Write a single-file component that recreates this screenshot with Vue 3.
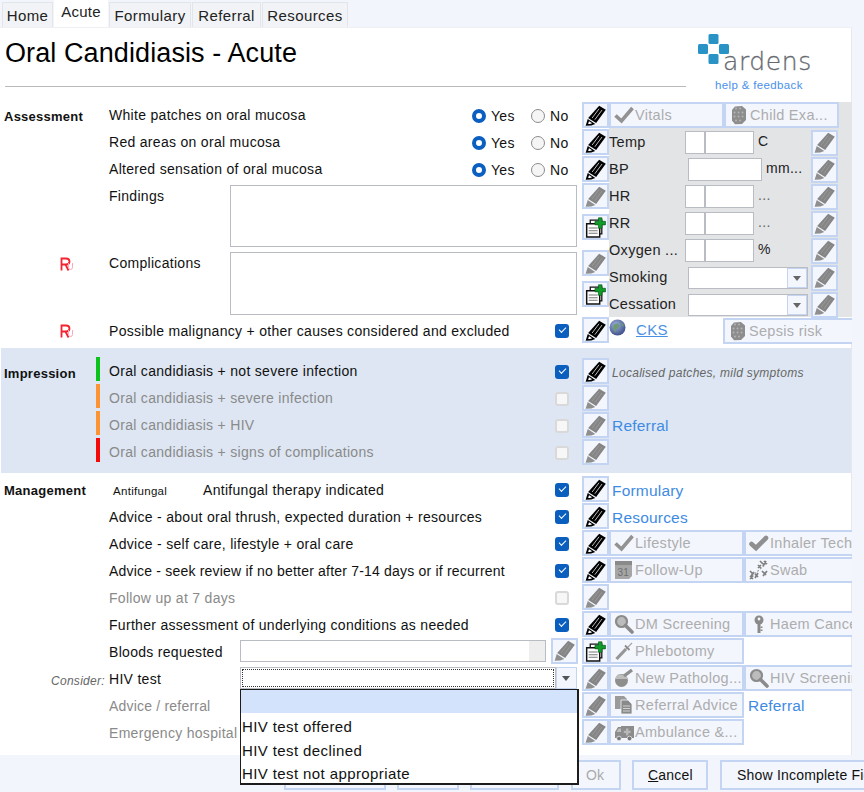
<script setup>
const tabs = ['Home', 'Acute', 'Formulary', 'Referral', 'Resources']
const radioRows = ['White patches on oral mucosa', 'Red areas on oral mucosa', 'Altered sensation of oral mucosa']
const vitals = [
  { label: 'Temp', kind: 'split', unit: 'C' },
  { label: 'BP', kind: 'wide', unit: 'mm...' },
  { label: 'HR', kind: 'split', unit: '...', faint: true },
  { label: 'RR', kind: 'split', unit: '...', faint: true },
  { label: 'Oxygen ...', kind: 'split', unit: '%' },
  { label: 'Smoking', kind: 'combo', unit: '' },
  { label: 'Cessation', kind: 'combo', unit: '' }
]
const impressions = [
  { text: 'Oral candidiasis + not severe infection', bar: 'green', on: true },
  { text: 'Oral candidiasis + severe infection', bar: 'orange' },
  { text: 'Oral candidiasis + HIV', bar: 'orange' },
  { text: 'Oral candidiasis + signs of complications', bar: 'red' }
]
const options = ['HIV test offered', 'HIV test declined', 'HIV test not appropriate']
</script>

<template>
  <div class="page">
    <svg class="defs" aria-hidden="true">
      <defs>
        <radialGradient id="gl" cx="40%" cy="35%" r="70%">
          <stop offset="0" stop-color="#9fb4dc" /><stop offset="1" stop-color="#3b4a86" />
        </radialGradient>
        <symbol id="pen-b" viewBox="0 0 20 20">
          <path d="M13.500 .6 19.800 4.600 10.600 17.200 3 12.400Z" fill="#000" />
          <path d="M13.400 3.600 6.800 12.400M16.200 4.800 9.400 14" stroke="#fff" stroke-width=".7" fill="none" />
          <path d="M2.600 13.400 9.800 18 6 19.600 .6 19.800 1.800 16Z" fill="#000" />
          <path d="M3.800 15.400 6.800 17.400 4.800 18.200 3 18.200Z" fill="#fff" />
        </symbol>
        <symbol id="pen-g" viewBox="0 0 20 20">
          <path d="M13.500 .6 19.800 4.600 10.600 17.200 3 12.400Z" fill="#858585" />
          <path d="M13.400 3.600 6.800 12.400M16.200 4.800 9.400 14" stroke="#a0a0a0" stroke-width=".7" fill="none" />
          <path d="M2.600 13.400 9.800 18 6 19.600 .6 19.800 1.800 16Z" fill="#8f8f8f" />
        </symbol>
        <symbol id="docplus" viewBox="0 0 20 20">
          <path d="M5 3h11v13H5z" fill="#fff" stroke="#111" stroke-width="1.200" />
          <path d="M1.600 6.500h12.400v12.500H1.600z" fill="#fff" stroke="#111" stroke-width="1.400" />
          <path d="M3.500 10.500h8.500M3.500 13h8.500M3.500 15.500h8.500" stroke="#777" />
          <path d="M12.800.8h3.400v3.300h3.300v3.400h-3.300v3.300h-3.400V7.500H9.500V4.100h3.300Z" fill="#0f9c2a" stroke="#0a4f14" stroke-width=".6" />
        </symbol>
        <symbol id="tick" viewBox="0 0 20 20">
          <path d="M1.500 10.500 7.500 16 18.500 3" fill="none" stroke="#929292" stroke-width="3.600" />
        </symbol>
        <symbol id="tick2" viewBox="0 0 20 20">
          <path d="M2.500 11 7 15 17 5" fill="none" stroke="#8f8f8f" stroke-width="4.600" stroke-linecap="round" />
        </symbol>
        <symbol id="cube" viewBox="0 0 20 20">
          <path d="M6 1.500 13 1l4 3.500V15l-4 4-7 .3L3 15.500V5Z" fill="#8d8d8d" />
          <path d="M7 3.500h.1M11 3.500h.1M5.500 7.500h.1M9.500 7.500h.1M13.500 7.500h.1M5.500 11.500h.1M9.500 11.500h.1M13.500 11.500h.1M7 15.500h.1M11 15.500h.1" stroke="#b5b5b5" stroke-width="1.800" stroke-linecap="round" />
        </symbol>
        <symbol id="cal" viewBox="0 0 20 20">
          <path d="M1 1h17v15l-3 3H1Z" fill="#a6a6a6" />
          <path d="M1 1h17v4H1Z" fill="#8a8a8a" />
          <text x="3.500" y="16" font-size="10" font-family="Liberation Sans" fill="#6f6f6f">31</text>
        </symbol>
        <symbol id="swab" viewBox="0 0 20 20">
          <path d="M3 16 17 4" stroke="#a2a2a2" stroke-width="1.200" stroke-dasharray="2 1.500" />
          <path d="M11 1l3 3M15 1l3 3M17 1l-3 5M9 5l3 3M12 5 9 8M1 11l3 3M5 12l-3 4M6 14l3 3M9 13l-3 5M13 11l4 4M18 11l-4 5M1 16l3 3M4 16l-3 3" stroke="#7f7f7f" stroke-width="1.700" fill="none" />
        </symbol>
        <symbol id="glass" viewBox="0 0 20 20">
          <circle cx="7.500" cy="7.500" r="5.500" fill="#bcbcbc" stroke="#8b8b8b" stroke-width="2.200" />
          <path d="M11.500 11.500 18 18" stroke="#8b8b8b" stroke-width="3.600" stroke-linecap="round" />
        </symbol>
        <symbol id="key" viewBox="0 0 20 20">
          <circle cx="10" cy="6" r="4.500" fill="#8a8a8a" />
          <circle cx="10" cy="5" r="1.400" fill="#f3f6fd" />
          <path d="M8.500 9h3v10h-3z" fill="#8a8a8a" />
          <path d="M11.500 12.500h2v1.600h-2zM11.500 15.500h2v1.600h-2z" fill="#8a8a8a" />
        </symbol>
        <symbol id="syringe" viewBox="0 0 20 20">
          <path d="M2.500 18 12 8" stroke="#969696" stroke-width="3.200" />
          <path d="M12 8 18 2" stroke="#a5a5a5" stroke-width="1.200" />
          <path d="M11 4.500 15.500 9" stroke="#8a8a8a" stroke-width="1.800" />
        </symbol>
        <symbol id="flask" viewBox="0 0 20 20">
          <circle cx="7.500" cy="12.500" r="6.500" fill="#8e8e8e" />
          <path d="M1.500 11h12a6 6 0 0 0-1-3L5 6A6 6 0 0 0 1.500 11Z" fill="#bdbdbd" />
          <path d="M10 8 18 2" stroke="#8e8e8e" stroke-width="3.400" />
        </symbol>
        <symbol id="docs" viewBox="0 0 20 20">
          <path d="M1 1h9l3 3v10H1Z" fill="#9a9a9a" />
          <path d="M7 5h7l4 4v10H7Z" fill="#8a8a8a" stroke="#f3f6fd" stroke-width=".8" />
          <path d="M9 11h7M9 13.500h7M9 16h7" stroke="#d0d0d0" />
        </symbol>
        <symbol id="amb" viewBox="0 0 20 20">
          <path d="M7 4h13v12H1v-6l3-5h3Z" fill="#8c8c8c" />
          <path d="M12 6.500h2.400v2.200h2.200v2.400h-2.200v2.200H12v-2.200H9.800V8.700H12Z" fill="#b8b8b8" />
          <path d="M2.500 10 4.600 6.500H7V10Z" fill="#bdbdbd" />
          <circle cx="5" cy="16.500" r="2.300" fill="#777" stroke="#f3f6fd" stroke-width=".7" />
          <circle cx="15.500" cy="16.500" r="2.300" fill="#777" stroke="#f3f6fd" stroke-width=".7" />
        </symbol>
      </defs>
    </svg>

    <nav class="tabs">
      <span v-for="t in tabs" :key="t" class="tab" :class="['tab-' + t.toLowerCase(), { active: t === 'Acute' }]">{{ t }}</span>
    </nav>

    <main class="panel">
      <header class="head">
        <div class="head-left"><h1>Oral Candidiasis - Acute</h1></div>
        <div class="logo">
          <svg class="cross" viewBox="0 0 31 30">
            <rect x="10.500" y="0" width="10" height="10" rx="1.500" fill="#2a93c6" />
            <rect x="0" y="10" width="10" height="10" rx="1.500" fill="#2a93c6" />
            <rect x="21" y="10" width="10" height="10" rx="1.500" fill="#2a93c6" />
            <rect x="10.500" y="20" width="10" height="10" rx="1.500" fill="#2a93c6" />
          </svg>
          <span class="word">ardens</span>
          <a class="help">help &amp; feedback</a>
        </div>
      </header>

      <section class="sec assess">
        <div class="left">
          <div v-for="(r, i) in radioRows" :key="r" class="row">
            <b class="lbl">{{ i === 0 ? 'Assessment' : '' }}</b>
            <span class="txt up">{{ r }}</span>
            <span class="radio on"></span><span class="rtext yes">Yes</span>
            <span class="radio"></span><span class="rtext no">No</span>
          </div>
          <div class="row tall">
            <span class="lbl"></span>
            <span class="txt short">Findings</span>
            <div class="memo"></div>
          </div>
          <div class="row tall">
            <span class="lbl flagged"><svg class="flag" viewBox="0 0 13 14"><path d="M1.500 13.500V1.500h4.500q3.500 0 3.500 3T6 7.500H1.500M5.500 7.500l3 6" fill="none" stroke="#f32430" stroke-width="1.800" /><path d="M8.500 6v4.500q0 2 2 2t2-2V6" fill="none" stroke="#f7a8bc" /></svg></span>
            <span class="txt short">Complications</span>
            <div class="memo memo2"></div>
          </div>
          <div class="row">
            <span class="lbl flagged"><svg class="flag" viewBox="0 0 13 14"><path d="M1.500 13.500V1.500h4.500q3.500 0 3.500 3T6 7.500H1.500M5.500 7.500l3 6" fill="none" stroke="#f32430" stroke-width="1.800" /><path d="M8.500 6v4.500q0 2 2 2t2-2V6" fill="none" stroke="#f7a8bc" /></svg></span>
            <span class="txt">Possible malignancy + other causes considered and excluded</span>
            <span class="chk on"></span>
          </div>
        </div>

        <div class="pens">
          <button class="pb"><svg class="ic"><use href="#pen-b" /></svg></button>
          <button class="pb"><svg class="ic"><use href="#pen-b" /></svg></button>
          <button class="pb"><svg class="ic"><use href="#pen-b" /></svg></button>
          <div class="pgroup">
            <button class="pb"><svg class="ic"><use href="#pen-g" /></svg></button>
            <button class="pb"><svg class="ic"><use href="#docplus" /></svg></button>
          </div>
          <div class="pgroup">
            <button class="pb"><svg class="ic"><use href="#pen-g" /></svg></button>
            <button class="pb"><svg class="ic"><use href="#docplus" /></svg></button>
          </div>
          <button class="pb"><svg class="ic"><use href="#pen-b" /></svg></button>
        </div>

        <div class="right">
          <div class="grey">
            <div class="rbtns">
              <button class="tb narrow"><svg class="tic"><use href="#tick" /></svg>Vitals</button>
              <button class="tb narrow"><svg class="tic"><use href="#cube" /></svg>Child Exa...</button>
            </div>
            <div v-for="v in vitals" :key="v.label" class="vrow">
              <span class="vlab">{{ v.label }}</span>
              <span v-if="v.kind === 'split'" class="split"><i></i><i></i></span>
              <span v-else-if="v.kind === 'wide'" class="wide"></span>
              <span v-else class="vcombo"><i></i></span>
              <span v-if="v.unit" class="unit" :class="{ faint: v.faint, far: v.kind === 'wide' }">{{ v.unit }}</span>
              <button class="pb vpen"><svg class="ic"><use href="#pen-g" /></svg></button>
            </div>
          </div>
          <div class="cks">
            <svg class="globe" viewBox="0 0 16 16"><circle cx="8" cy="8" r="7.500" fill="url(#gl)" /><path d="M4 6q3-3 5-1t-1 4-1 4q-3-1-3-7ZM11 3q3 1 3 4-2 0-3-4Z" fill="#6d9a74" /></svg>
            <a class="cks-link">CKS</a>
            <button class="tb sepsis"><svg class="tic"><use href="#cube" /></svg>Sepsis risk</button>
          </div>
        </div>
      </section>

      <section class="sec impression">
        <div class="left">
          <div v-for="(m, i) in impressions" :key="m.text" class="row">
            <b class="lbl lbl-imp">{{ i === 0 ? 'Impression' : '' }}<i class="bar" :class="m.bar"></i></b>
            <span class="txt up" :class="{ dim: !m.on }">{{ m.text }}</span>
            <span class="chk" :class="{ on: m.on }"></span>
          </div>
        </div>
        <div class="pens">
          <button v-for="(m, i) in impressions" :key="i" class="pb"><svg class="ic"><use :href="m.on ? '#pen-b' : '#pen-g'" /></svg></button>
        </div>
        <div class="right">
          <div class="hint">Localised patches, mild symptoms</div>
          <div class="hint"></div>
          <a class="link">Referral</a>
        </div>
      </section>

      <section class="sec manage">
        <div class="left">
          <div class="row">
            <b class="lbl">Management</b>
            <span class="tag">Antifungal</span>
            <span class="txt">Antifungal therapy indicated</span>
            <span class="chk on"></span>
          </div>
          <div class="row"><span class="lbl"></span><span class="txt">Advice - about oral thrush, expected duration + resources</span><span class="chk on"></span></div>
          <div class="row"><span class="lbl"></span><span class="txt">Advice - self care, lifestyle + oral care</span><span class="chk on"></span></div>
          <div class="row"><span class="lbl"></span><span class="txt tight">Advice - seek review if no better after 7-14 days or if recurrent</span><span class="chk on"></span></div>
          <div class="row"><span class="lbl"></span><span class="txt dim">Follow up at 7 days</span><span class="chk"></span></div>
          <div class="row"><span class="lbl"></span><span class="txt">Further assessment of underlying conditions as needed</span><span class="chk on"></span></div>
          <div class="row">
            <span class="lbl"></span><span class="txt short2">Bloods requested</span>
            <span class="blood"><i></i></span>
            <button class="pb bloodpen"><svg class="ic"><use href="#pen-g" /></svg></button>
          </div>
          <div class="row">
            <span class="lbl lbl-cons"><em>Consider:</em></span><span class="txt short2">HIV test</span>
            <div class="combo">
              <span class="focus"></span><span class="arrow"><i></i></span>
              <div class="menu">
                <div class="opt sel"></div>
                <div v-for="o in options" :key="o" class="opt">{{ o }}</div>
              </div>
            </div>
          </div>
          <div class="row"><span class="lbl"></span><span class="txt dim tight">Advice / referral</span></div>
          <div class="row"><span class="lbl"></span><span class="txt dim">Emergency hospital</span></div>
        </div>
        <div class="pens">
          <button class="pb"><svg class="ic"><use href="#pen-b" /></svg></button>
          <button class="pb"><svg class="ic"><use href="#pen-b" /></svg></button>
          <button class="pb"><svg class="ic"><use href="#pen-b" /></svg></button>
          <button class="pb"><svg class="ic"><use href="#pen-b" /></svg></button>
          <button class="pb"><svg class="ic"><use href="#pen-g" /></svg></button>
          <button class="pb"><svg class="ic"><use href="#pen-b" /></svg></button>
          <button class="pb"><svg class="ic"><use href="#docplus" /></svg></button>
          <button class="pb"><svg class="ic"><use href="#pen-g" /></svg></button>
          <button class="pb"><svg class="ic"><use href="#pen-g" /></svg></button>
          <button class="pb"><svg class="ic"><use href="#pen-g" /></svg></button>
        </div>
        <div class="right">
          <a class="link line">Formulary</a>
          <a class="link line">Resources</a>
          <div class="rbtns"><button class="tb"><svg class="tic"><use href="#tick" /></svg>Lifestyle</button><button class="tb"><svg class="tic"><use href="#tick2" /></svg>Inhaler Technique</button></div>
          <div class="rbtns"><button class="tb"><svg class="tic"><use href="#cal" /></svg>Follow-Up</button><button class="tb"><svg class="tic"><use href="#swab" /></svg>Swab</button></div>
          <div class="rbtns"></div>
          <div class="rbtns"><button class="tb"><svg class="tic"><use href="#glass" /></svg>DM Screening</button><button class="tb"><svg class="tic"><use href="#key" /></svg>Haem Cancer</button></div>
          <div class="rbtns"><button class="tb"><svg class="tic"><use href="#syringe" /></svg>Phlebotomy</button></div>
          <div class="rbtns"><button class="tb"><svg class="tic"><use href="#flask" /></svg>New Patholog...</button><button class="tb"><svg class="tic"><use href="#glass" /></svg>HIV Screening</button></div>
          <div class="rbtns"><button class="tb"><svg class="tic"><use href="#docs" /></svg>Referral Advice</button><a class="link inline">Referral</a></div>
          <div class="rbtns"><button class="tb"><svg class="tic"><use href="#amb" /></svg>Ambulance &amp;...</button></div>
        </div>
      </section>
    </main>

    <footer class="foot">
      <button class="fb f1"></button>
      <button class="fb f2"></button>
      <button class="fb f3"></button>
      <button class="fb f4">Ok</button>
      <button class="fb f5"><u>C</u>ancel</button>
      <button class="fb f6">Show Incomplete Fields</button>
    </footer>
  </div>
</template>

<style>
html, body { margin: 0; padding: 0; background: #f2f5fc; }
</style>

<style scoped>
.page { width: 864px; height: 792px; overflow: hidden; background: #f2f5fc; font: 14px/20px "Liberation Sans", Arial, sans-serif; color: #111; letter-spacing: .3px; }
.defs { position: absolute; width: 0; height: 0; }
button { font: inherit; letter-spacing: inherit; padding: 0; margin: 0; }

.tabs { height: 27px; display: flex; padding-left: 2px; box-sizing: border-box; align-items: flex-end; }
.tab { height: 25px; box-sizing: border-box; background: #f1f3f6; border: 1px solid #e2e5ea; border-bottom: 0; text-align: center; line-height: 25px; font-size: 15px; letter-spacing: .4px; margin-right: 1px; color: #222; }
.tab.active { height: 27px; background: #fff; border-color: #fff; line-height: 22px; margin-right: 1px; letter-spacing: .2px; }
.tab-home { width: 51px; }
.tab-acute { width: 54px; }
.tab-formulary { width: 82px; }
.tab-referral { width: 69px; }
.tab-resources { width: 86px; }

.panel { width: 852px; height: 728px; background: #fff; border-right: 1px solid #e6e8ed; border-top: 1px solid #eef0f3; box-sizing: border-box; }
.head { height: 73px; display: flex; }
.head-left { width: 681px; height: 59px; margin-left: 5px; border-bottom: 1px solid #b9b9b9; box-sizing: border-box; }
h1 { margin: 0; font-weight: 400; font-size: 27px; line-height: 30px; padding-top: 10px; letter-spacing: .1px; color: #000; }
.logo { margin-left: 12px; padding-top: 6px; display: flex; flex-direction: column; }
.cross { width: 31px; height: 30px; }
.word { font-family: "DejaVu Sans", sans-serif; font-weight: 200; font-size: 25px; line-height: 20px; color: #666a70; margin: -12px 0 0 25px; letter-spacing: .6px; -webkit-text-stroke: .3px #666a70; }
.help { font-size: 11.500px; line-height: 14px; color: #4a90ea; margin: 6px 0 0 17px; letter-spacing: .35px; }

.sec { display: flex; }
.left { width: 582px; flex: none; }
.pens { width: 27px; flex: none; display: flex; flex-direction: column; gap: 1px; }
.right { width: 243px; flex: none; overflow: hidden; }
.assess { height: 247px; padding-top: 1px; box-sizing: border-box; }
.impression { height: 125px; padding-top: 10px; box-sizing: border-box; background: #dde6f2; margin-left: 1px; }
.impression .left { width: 581px; }
.impression .right { width: 242px; }
.manage { height: 281px; padding-top: 3px; box-sizing: border-box; }

.row { height: 27px; display: flex; align-items: center; position: relative; }
.tall { height: 67px; align-items: flex-start; }
.lbl { width: 109px; flex: none; box-sizing: border-box; padding: 2px 0 0 4px; font-size: 13px; letter-spacing: .25px; }
.txt { flex: 1; white-space: nowrap; overflow: hidden; }
.up { margin-top: -2px; }
.tight { letter-spacing: .2px; }
.tall .txt { line-height: 27px; }
.short { flex: none; width: 121px; }
.short2 { flex: none; width: 131px; }
.dim { color: #8a8a8a; }
.flagged { height: 27px; display: flex; align-items: center; padding: 0 0 0 60px; }
.flag { width: 13px; height: 14px; }

.radio { width: 14px; height: 14px; flex: none; box-sizing: border-box; border-radius: 50%; border: 1px solid #8c8c8c; background: #f5f5f5; }
.radio.on { border: 4px solid #0b5fc0; background: #fff; }
.rtext { flex: none; margin-left: 5px; }
.rtext.yes { width: 40px; }
.rtext.no { width: 32px; }

.chk { width: 14px; height: 14px; margin: 0 13px; box-sizing: border-box; border-radius: 3px; flex: none; border: 2px solid #d9d9d9; background: #f7f7f7; position: relative; }
.chk.on { border: 0; background: #0a5fbe; }
.chk.on::after { content: ""; position: absolute; left: 4px; top: 3px; width: 6px; height: 3px; border: solid #fff; border-width: 0 0 1.500px 1.500px; transform: rotate(-45deg); }

.memo { width: 347px; height: 62px; margin-top: 2px; box-sizing: border-box; border: 1px solid #b9bcc2; background: #fff; }
.memo2 { height: 63px; }

.pb { width: 27px; height: 26px; flex: none; box-sizing: border-box; background: #f3f6fd; border: 2px solid #c3d5f3; display: flex; align-items: center; justify-content: center; }
.ic { width: 21px; height: 21px; }
.pgroup { height: 66px; display: flex; flex-direction: column; gap: 5px; }

.grey { background: #e3e4e6; height: 215px; }
.rbtns { height: 27px; display: flex; flex: none; }
.tb { width: 135px; height: 26px; flex: none; box-sizing: border-box; background: #f3f6fd; border: 2px solid #c3d5f3; display: flex; align-items: center; color: #adadad; padding: 0 0 1px 3px; white-space: nowrap; overflow: hidden; font-size: 14.500px; }
.tb.narrow { width: 115px; }
.tic { width: 20px; height: 20px; flex: none; margin: 1px 1px 0 0; }

.vrow { height: 27px; display: grid; grid-template-columns: 76px 1fr 27px 14px; align-items: center; position: relative; }
.vrow .vpen { grid-column: 3; }
.vlab { white-space: nowrap; color: #222; font-size: 14.500px; margin-top: -2px; }
.split { display: flex; position: absolute; left: 76px; top: 2px; width: 69px; height: 23px; }
.split i, .wide, .vcombo { box-sizing: border-box; background: #fff; border: 1px solid #b9bcc2; display: block; }
.split i:first-child { width: 20px; }
.split i:last-child { flex: 1; }
.wide { position: absolute; left: 79px; top: 2px; width: 74px; height: 23px; }
.vcombo { position: absolute; left: 79px; top: 3px; width: 120px; height: 22px; }
.vcombo i { position: absolute; right: 0; top: 0; bottom: 0; width: 20px; background: #f3f6fd; border: 1px solid #c3d5f3; box-sizing: border-box; }
.vcombo i::after { content: ""; position: absolute; left: 5px; top: 7px; border: 4px solid transparent; border-top: 5px solid #666; border-bottom: 0; }
.unit { position: absolute; left: 149px; top: 2px; color: #222; }
.unit.far { left: 157px; }
.unit.faint { color: #666; }

.cks { height: 27px; display: flex; align-items: center; background: #fff; }
.globe { width: 17px; height: 17px; margin-top: -6px; flex: none; margin-right: 10px; }
.cks-link { color: #4a90e2; text-decoration: underline; font-size: 15px; width: 87px; flex: none; margin-top: -2px; }
.tb.sepsis { width: 135px; margin-top: 1px; border-right: 0; }

.lbl-imp { position: relative; height: 27px; line-height: 27px; padding: 2px 0 0 3px; width: 108px; }
.bar { position: absolute; left: 95px; top: -1px; width: 4px; height: 24px; }
.green { background: #0cc31c; }
.orange { background: #fd9433; }
.red { background: #f50a0a; }
.hint { height: 27px; padding: 2px 0 0 3px; box-sizing: border-box; font-size: 12px; font-style: italic; color: #666; line-height: 27px; white-space: nowrap; letter-spacing: .28px; }
.link { display: block; color: #3f8be4; font-size: 15.500px; padding-left: 3px; line-height: 27px; height: 27px; letter-spacing: .2px; }
.link.line { line-height: 29px; }
.link.inline { padding-left: 4px; }
.tag { position: absolute; left: 113px; top: 2px; font-size: 11.500px; letter-spacing: .3px; line-height: 27px; }
.manage .row:first-child .txt { padding-left: 94px; }

.blood { width: 306px; height: 22px; flex: none; box-sizing: border-box; border: 1px solid #b9bcc2; background: #fff; position: relative; margin-top: -2px; }
.blood i { position: absolute; right: 0; top: 0; bottom: 0; width: 16px; background: #eee; }
.bloodpen { margin-left: 5px; margin-top: -2px; }
.lbl-cons { padding: 4px 4px 0 0; text-align: right; font-size: 12px; color: #666; letter-spacing: .3px; }
.combo { width: 339px; height: 22px; flex: none; position: relative; display: flex; margin-top: -2px; box-sizing: border-box; }
.focus { width: 316px; height: 22px; box-sizing: border-box; border: 1px solid #b9bcc2; position: relative; }
.focus::after { content: ""; position: absolute; inset: 1px; border: 1px dotted #333; }
.arrow { width: 21px; height: 22px; box-sizing: border-box; background: #f3f6fd; border: 1px solid #c3d5f3; position: relative; }
.arrow i { position: absolute; left: 5px; top: 8px; border: 4px solid transparent; border-top: 5px solid #555; border-bottom: 0; }
.menu { position: absolute; z-index: 5; left: 0; top: 22px; width: 339px; height: 96px; box-sizing: border-box; background: #fff; border: 1px solid #1c1c1c; border-right-width: 2px; border-bottom-width: 2px; }
.opt { height: 23.500px; line-height: 23.500px; padding-left: 1px; font-size: 15px; letter-spacing: .4px; color: #111; }
.opt.sel { background: #d3e3fb; height: 23px; margin-bottom: 2.500px; }

.foot { height: 37px; box-sizing: border-box; padding: 5px 0 0 284px; display: flex; overflow: hidden; }
.fb { height: 30px; flex: none; box-sizing: border-box; background: #f3f6fd; border: 2px solid #c3d5f3; white-space: nowrap; color: #111; text-align: left; letter-spacing: .2px; }
.f1 { width: 102px; margin-right: 11px; }
.f2 { width: 62px; margin-right: 11px; }
.f3 { width: 89px; margin-right: 12px; }
.f4 { width: 50px; margin-right: 11px; color: #aaa; padding-left: 13px; }
.f5 { width: 76px; margin-right: 12px; padding-left: 14px; }
.f6 { width: 200px; padding-left: 15px; }
</style>
